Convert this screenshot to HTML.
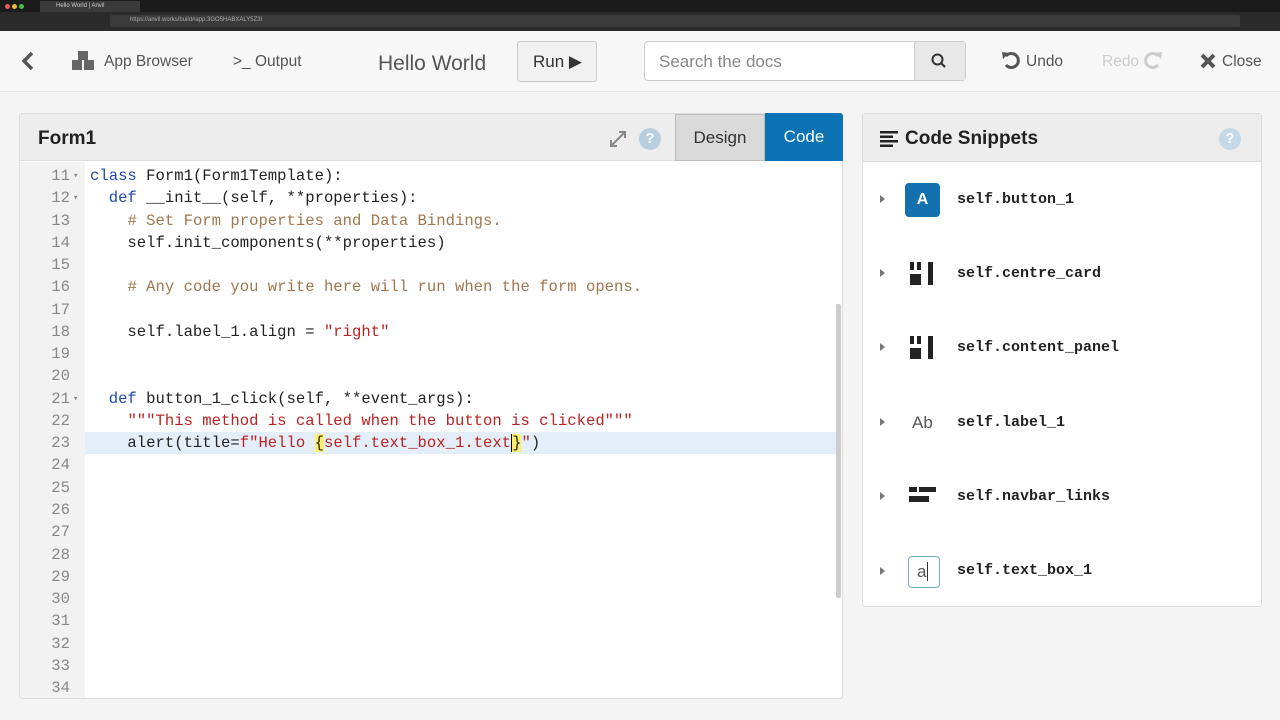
<!DOCTYPE html>
<html><head><meta charset="utf-8"><style>
*{box-sizing:border-box;margin:0;padding:0}
body{width:1280px;height:720px;overflow:hidden;background:#f4f4f4;font-family:"Liberation Sans",sans-serif;position:relative}
.abs{position:absolute}
.chrome{left:0;top:0;width:1280px;height:31px;background:#2a2a2a}
.tabbar{left:0;top:0;width:1280px;height:12px;background:#1b1b1b}
.tab{left:40px;top:1px;width:100px;height:11px;background:#3a3a3a;color:#ccc;font-size:6px;padding:2px 0 0 16px}
.url{left:110px;top:15px;width:1130px;height:12px;background:#3b3b3b;border-radius:2px;color:#aaa;font-size:6px;padding:2px 20px}
.appbar{left:0;top:31px;width:1280px;height:61px;background:#f7f7f7;border-bottom:1px solid #e2e2e2}
.nav{font-size:15.5px;color:#555;top:53px}
.panel{background:#fff;border:1px solid #ddd;border-radius:3px}
.code{font-family:"Liberation Mono",monospace;font-size:15.6px;line-height:22.26px;white-space:pre;color:#222}
.ln{color:#888;text-align:right;width:70px}
.kw{color:#1c4ea8}.cm{color:#a0774e}.st{color:#b22}
.snip{font-family:"Liberation Mono",monospace;font-weight:bold;font-size:15px;color:#222;left:957px}
.tri{left:880px;width:0;height:0;border-left:5px solid #777;border-top:4px solid transparent;border-bottom:4px solid transparent}
</style></head><body>
<div class="abs chrome"></div>
<div class="abs tabbar"></div>
<div class="abs" style="left:5px;top:4px;width:5px;height:5px;border-radius:50%;background:#e55"></div>
<div class="abs" style="left:12px;top:4px;width:5px;height:5px;border-radius:50%;background:#eb3"></div>
<div class="abs" style="left:19px;top:4px;width:5px;height:5px;border-radius:50%;background:#4b4"></div>
<div class="abs tab">Hello World | Anvil</div>
<div class="abs url">https://anvil.works/build#app:3GO5HABXALY5Z3I</div>
<div class="abs appbar"></div>
<svg class="abs" style="left:20px;top:51px" width="16" height="20"><path d="M12 2 L4 10 L12 18" stroke="#555" stroke-width="3.5" fill="none"/></svg>
<svg class="abs" style="left:70px;top:49px" width="28" height="24"><g fill="#666"><rect x="8" y="2" width="10" height="9"/><rect x="2" y="11" width="10" height="10"/><rect x="14" y="11" width="10" height="10"/></g></svg>
<div class="abs nav" style="left:104px">App Browser</div>
<div class="abs nav" style="left:233px">&gt;_ Output</div>
<div class="abs" style="left:378px;top:52px;font-size:21px;color:#555">Hello World</div>
<div class="abs" style="left:517px;top:41px;width:80px;height:41px;border:1px solid #ccc;border-radius:3px;background:#f1f1f1;font-size:17px;color:#333;padding:10px 0 0 15px">Run ▶</div>
<div class="abs" style="left:644px;top:41px;width:322px;height:40px;border:1px solid #ccc;border-radius:4px;background:#fff"></div>
<div class="abs" style="left:914px;top:42px;width:51px;height:38px;background:#e8e8e8;border-left:1px solid #ccc"></div>
<div class="abs" style="left:659px;top:52px;font-size:17px;color:#888">Search the docs</div>
<svg class="abs" style="left:931px;top:53px" width="16" height="16"><circle cx="6.5" cy="6.5" r="5" stroke="#333" stroke-width="2" fill="none"/><path d="M10 10 L14 14" stroke="#333" stroke-width="2.2"/></svg>
<svg class="abs" style="left:1001px;top:50px" width="20" height="20"><path d="M5 6 A7 7 0 1 1 5 15" stroke="#555" stroke-width="3" fill="none"/><path d="M1 2 L8 3 L2 9Z" fill="#555"/></svg>
<div class="abs nav" style="left:1026px">Undo</div>
<div class="abs nav" style="left:1102px;color:#ccc">Redo</div>
<svg class="abs" style="left:1143px;top:50px" width="20" height="20"><path d="M15 6 A7 7 0 1 0 15 15" stroke="#ccc" stroke-width="3" fill="none"/><path d="M19 2 L12 3 L18 9Z" fill="#ccc"/></svg>
<svg class="abs" style="left:1200px;top:53px" width="16" height="16"><path d="M2 2L14 14M14 2L2 14" stroke="#555" stroke-width="4"/></svg>
<div class="abs nav" style="left:1222px">Close</div>

<div class="abs panel" style="left:19px;top:113px;width:824px;height:586px"></div>
<div class="abs" style="left:20px;top:114px;width:655px;height:47px;background:#ededed;border-bottom:1px solid #ddd"></div>
<div class="abs" style="left:38px;top:128px;font-size:19px;font-weight:bold;color:#222">Form1</div>
<svg class="abs" style="left:609px;top:130px" width="18" height="18"><path d="M2 16L16 2M10 2H16V8M2 10V16H8" stroke="#888" stroke-width="2" fill="none"/></svg>
<div class="abs" style="left:639px;top:128px;width:22px;height:22px;border-radius:50%;background:#b8cfe2;color:#fff;font-size:15px;font-weight:bold;text-align:center;line-height:22px">?</div>
<div class="abs" style="left:675px;top:114px;width:90px;height:47px;background:#dadada;border:1px solid #bbb;font-size:17px;color:#333;text-align:center;line-height:46px">Design</div>
<div class="abs" style="left:765px;top:113px;width:78px;height:48px;background:#0b72b6;border-radius:0 3px 0 0;font-size:17px;color:#fff;text-align:center;line-height:48px">Code</div>
<div class="abs" style="left:20px;top:162px;width:65px;height:536px;background:#f2f2f2"></div>
<div class="abs" style="left:85px;top:432px;width:752px;height:22px;background:#e4eef8"></div>
<div class="abs" style="left:836px;top:304px;width:5px;height:294px;background:#ccc;border-radius:2px"></div>
<div class="abs code ln" style="left:0;top:165px">11
12
13
14
15
16
17
18
19
20
21
22
23
24
25
26
27
28
29
30
31
32
33
34</div>
<div class="abs code" style="left:73px;top:165px;font-size:9px;line-height:22.26px;color:#888">▾
▾








▾</div>
<div class="abs code" style="left:90px;top:165px"><span class="kw">class</span> Form1(Form1Template):
  <span class="kw">def</span> __init__(self, **properties):
    <span class="cm"># Set Form properties and Data Bindings.</span>
    self.init_components(**properties)

    <span class="cm"># Any code you write here will run when the form opens.</span>

    self.label_1.align = <span class="st">"right"</span>


  <span class="kw">def</span> button_1_click(self, **event_args):
    <span class="st">"""This method is called when the button is clicked"""</span>
    alert(title=<span class="st">f"Hello <span style="color:#222;background:#ffef70">{</span>self.text_box_1.text<span style="color:#222;background:#ffef70;border-left:1px solid #000">}</span>"</span>)</div>

<div class="abs panel" style="left:862px;top:113px;width:400px;height:494px"></div>
<div class="abs" style="left:863px;top:114px;width:398px;height:48px;background:#ededed;border-bottom:1px solid #ddd"></div>
<svg class="abs" style="left:880px;top:131px" width="20" height="16"><g fill="#222"><rect x="0" y="0" width="18" height="2.5"/><rect x="0" y="4.5" width="13" height="2.5"/><rect x="0" y="9" width="18" height="2.5"/><rect x="0" y="13.5" width="13" height="2.5"/></g></svg>
<div class="abs" style="left:905px;top:128px;font-size:19px;font-weight:bold;color:#222">Code Snippets</div>
<div class="abs" style="left:1219px;top:128px;width:22px;height:22px;border-radius:50%;background:#c4d8e8;color:#fff;font-size:15px;font-weight:bold;text-align:center;line-height:22px">?</div>

<div class="abs tri" style="top:195px"></div>
<div class="abs" style="left:905px;top:183px;width:35px;height:34px;border-radius:4px;background:#1570b0;color:#fff;font-size:16px;font-weight:bold;text-align:center;line-height:34px">A</div>
<div class="abs snip" style="top:191px">self.button_1</div>

<div class="abs tri" style="top:269px"></div>
<svg class="abs" style="left:910px;top:262px" width="26" height="25"><g fill="#222"><rect x="0" y="0" width="4" height="8"/><rect x="7" y="0" width="4" height="8"/><rect x="0" y="12" width="11" height="11"/><rect x="18" y="0" width="5" height="23"/></g></svg>
<div class="abs snip" style="top:265px">self.centre_card</div>

<div class="abs tri" style="top:343px"></div>
<svg class="abs" style="left:910px;top:336px" width="26" height="25"><g fill="#222"><rect x="0" y="0" width="4" height="8"/><rect x="7" y="0" width="4" height="8"/><rect x="0" y="12" width="11" height="11"/><rect x="18" y="0" width="5" height="23"/></g></svg>
<div class="abs snip" style="top:339px">self.content_panel</div>

<div class="abs tri" style="top:418px"></div>
<div class="abs" style="left:912px;top:413px;font-size:17px;color:#555">Ab</div>
<div class="abs snip" style="top:414px">self.label_1</div>

<div class="abs tri" style="top:492px"></div>
<svg class="abs" style="left:909px;top:487px" width="28" height="16"><g fill="#222"><rect x="0" y="0" width="8" height="5"/><rect x="10" y="0" width="17" height="5"/><rect x="0" y="9" width="20" height="6"/></g></svg>
<div class="abs snip" style="top:488px">self.navbar_links</div>

<div class="abs tri" style="top:567px"></div>
<div class="abs" style="left:908px;top:556px;width:32px;height:32px;border:1px solid #7ab;border-radius:4px;font-size:17px;color:#555;padding:5px 0 0 8px">a<span style="border-left:1px solid #333;margin-left:1px"></span></div>
<div class="abs snip" style="top:562px">self.text_box_1</div>
</body></html>
